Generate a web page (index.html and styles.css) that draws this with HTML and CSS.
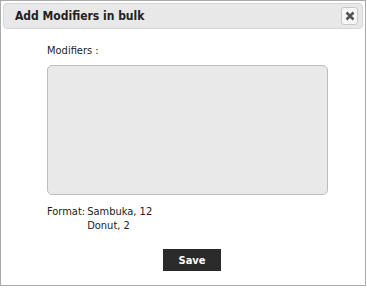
FILE: index.html
```html
<!DOCTYPE html>
<html lang="en">
<head>
    <title>Add Modifiers in bulk</title>
    <link rel="stylesheet" href="styles.css">
</head>
<body>
    <div class="dialog">
        <div class="titlebar">
            <span class="title">Add Modifiers in bulk</span>
            <button type="button" class="close" title="Close">
                <svg width="10" height="10" viewBox="0 0 10 10"><path d="M1.5 1.5 L8.5 8.5 M8.5 1.5 L1.5 8.5" stroke="#555" stroke-width="2.6"/></svg>
            </button>
        </div>
        <div class="content">
            <label class="lbl" for="mods">Modifiers :</label>
            <textarea id="mods" class="mods"></textarea>
            <div class="format">
                <span class="fmt-key">Format:</span>
                <span class="fmt-val">Sambuka, 12<br>Donut, 2</span>
            </div>
            <div class="actions">
                <button type="button" class="save">Save</button>
            </div>
        </div>
    </div>
</body>
</html>
```

FILE: styles.css
```css
body {
    margin: 0;
    background: #fff;
    font-family: "DejaVu Sans Condensed", "DejaVu Sans", sans-serif;
    font-stretch: condensed;
    font-size: 11px;
    color: #222;
}
.dialog {
    box-sizing: border-box;
    width: 366px;
    height: 286px;
    border: 1px solid #aaa;
    padding: 2px;
}
.titlebar {
    box-sizing: border-box;
    height: 26px;
    display: flex;
    align-items: center;
    justify-content: space-between;
    padding: 0 4px 0 11px;
    background: #e8e8e8;
    border: 1px solid #d6d6d6;
    border-radius: 4px;
}
.title {
    font-weight: bold;
    font-size: 12px;
    color: #222;
}
.close {
    box-sizing: border-box;
    width: 17px;
    height: 18px;
    padding: 0;
    display: flex;
    align-items: center;
    justify-content: center;
    background: #f7f7f7;
    border: 1px solid #c8c8c8;
    border-radius: 3px;
}
.content {
    padding: 14px 0 0 44px;
}
.lbl {
    display: block;
    height: 16px;
    line-height: 16px;
}
.mods {
    display: block;
    box-sizing: border-box;
    width: 281px;
    height: 130px;
    margin: 6px 0 0;
    background: #e9e9e9;
    border: 1px solid #bdbdbd;
    border-radius: 5px;
    resize: none;
}
.format {
    display: flex;
    gap: 2px;
    margin-top: 10px;
    line-height: 14px;
}
.actions {
    display: flex;
    justify-content: center;
    width: 290px;
    margin-top: 16px;
}
.save {
    width: 58px;
    height: 22px;
    padding: 0;
    border: none;
    background: #2b2b2b;
    color: #fff;
    font-family: inherit;
    font-weight: bold;
    font-size: 11px;
}
```
